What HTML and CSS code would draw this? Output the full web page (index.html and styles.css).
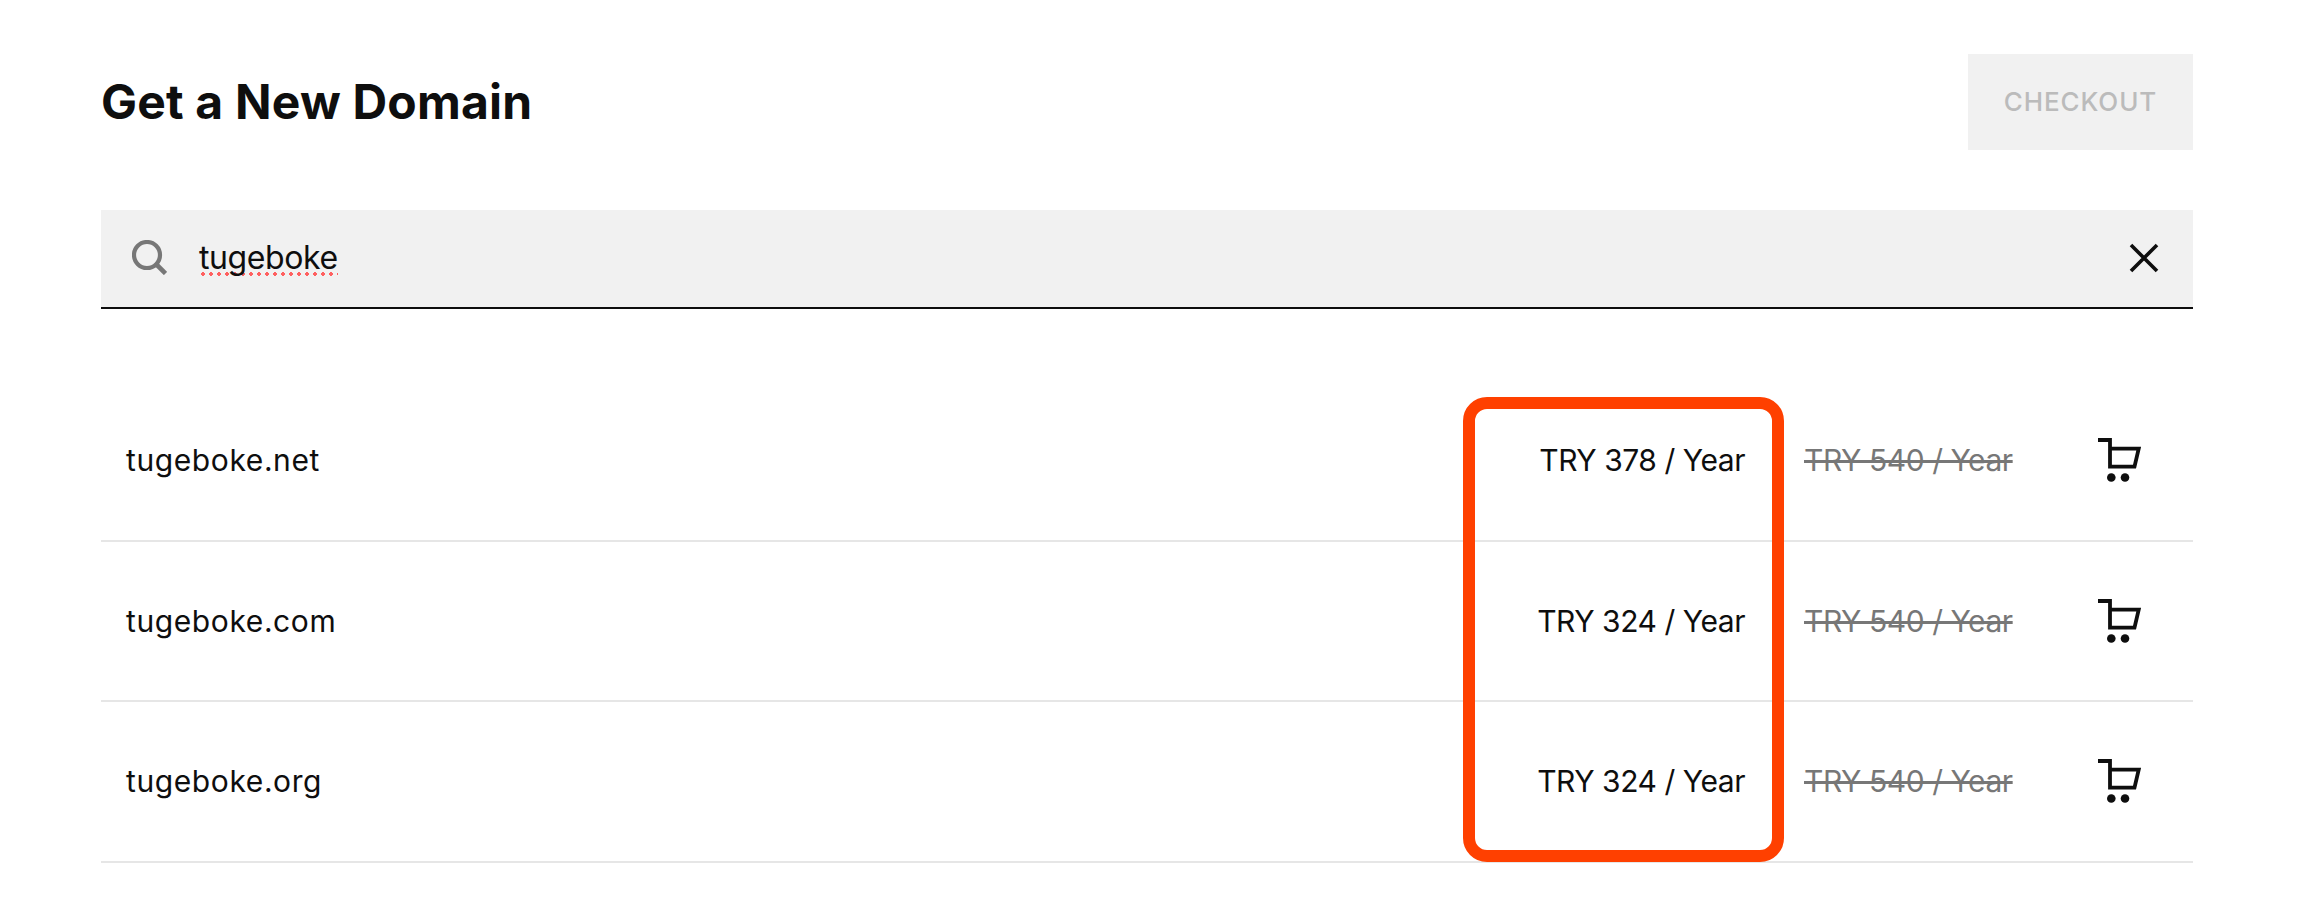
FILE: index.html
```html
<!DOCTYPE html>
<html lang="en">
<head>
<meta charset="utf-8">
<title>Get a New Domain</title>
<link rel="stylesheet" href="styles.css">
</head>
<body>
<main class="page">
  <header class="header">
    <h1 class="title">Get a New Domain</h1>
    <button class="checkout" type="button" disabled>CHECKOUT</button>
  </header>
  <div class="search">
    <svg class="search-icon" viewBox="0 0 35 35" aria-hidden="true"><circle cx="15" cy="15" r="13" fill="none" stroke="#777" stroke-width="4.2"/><path d="M24.5 24.5 L33.5 33.5" fill="none" stroke="#777" stroke-width="4.6"/></svg>
    <span class="query">tugeboke</span>
    <svg class="close-icon" viewBox="0 0 30 30" aria-hidden="true"><path d="M2 2 L28 28 M28 2 L2 28" fill="none" stroke="#0e0e0e" stroke-width="3.6"/></svg>
  </div>
  <section class="results">
    <div class="row">
      <span class="name">tugeboke.net</span>
      <span class="price">TRY 378 / Year</span>
      <s class="old">TRY 540 / Year</s>
      <svg class="cart" viewBox="0 0 43 44" aria-hidden="true"><path d="M0 2 H12 V28.7 H36.5 L40.7 10.7 H12" fill="none" stroke="#0e0e0e" stroke-width="3.8"/><circle cx="13.3" cy="39.5" r="4.3" fill="#0e0e0e"/><circle cx="27" cy="39.5" r="4.3" fill="#0e0e0e"/></svg>
    </div>
    <div class="row">
      <span class="name">tugeboke.com</span>
      <span class="price">TRY 324 / Year</span>
      <s class="old">TRY 540 / Year</s>
      <svg class="cart" viewBox="0 0 43 44" aria-hidden="true"><path d="M0 2 H12 V28.7 H36.5 L40.7 10.7 H12" fill="none" stroke="#0e0e0e" stroke-width="3.8"/><circle cx="13.3" cy="39.5" r="4.3" fill="#0e0e0e"/><circle cx="27" cy="39.5" r="4.3" fill="#0e0e0e"/></svg>
    </div>
    <div class="row">
      <span class="name">tugeboke.org</span>
      <span class="price">TRY 324 / Year</span>
      <s class="old">TRY 540 / Year</s>
      <svg class="cart" viewBox="0 0 43 44" aria-hidden="true"><path d="M0 2 H12 V28.7 H36.5 L40.7 10.7 H12" fill="none" stroke="#0e0e0e" stroke-width="3.8"/><circle cx="13.3" cy="39.5" r="4.3" fill="#0e0e0e"/><circle cx="27" cy="39.5" r="4.3" fill="#0e0e0e"/></svg>
    </div>
    <div class="highlight"></div>
  </section>
</main>
</body>
</html>
```

FILE: styles.css
```css
* { box-sizing: border-box; }
html, body { margin: 0; height: 100%; background: #fff; overflow: hidden; }
body { font-family: Inter, "Liberation Sans", sans-serif; color: #0e0e0e; }

.page { padding: 54px 127px 0 101px; }

.header { display: flex; justify-content: space-between; align-items: center; }
.title { margin: 0; font-size: 48px; font-weight: 700; line-height: 96px; letter-spacing: 0.2px; }
.checkout {
  width: 225px; height: 96px; border: 0; padding: 0 0 2px;
  background: #f1f1f1; color: #bbb;
  font: 500 26px Inter, "Liberation Sans", sans-serif;
  letter-spacing: 0.9px;
}

.search {
  display: flex; align-items: center;
  height: 99px; margin-top: 60px; padding: 0 34px 2px 31px;
  background: #f1f1f1; border-bottom: 2px solid #0e0e0e;
}
.search-icon { width: 35px; height: 35px; flex: none; }
.query {
  margin-left: 32px; font-size: 32px; line-height: 36px; letter-spacing: -0.4px;
  background: radial-gradient(circle at center, #ff6060 1.7px, transparent 2.1px) 0 100% / 8px 4px repeat-x;
}
.close-icon { width: 30px; height: 30px; margin-left: auto; flex: none; }

.results { position: relative; margin-top: 72px; }
.row {
  display: grid;
  grid-template-columns: 1fr auto 267px 129px;
  align-items: center;
  height: 160.5px; padding: 0 52px 0 25px;
  border-bottom: 2px solid #e6e6e6;
  font-size: 30px;
}
.name { letter-spacing: 0.6px; }
.price { text-align: right; letter-spacing: -0.45px; }
.old { margin-left: 59px; color: #777; white-space: nowrap; letter-spacing: -0.45px; text-decoration-thickness: 3px; }
.cart { width: 43px; height: 44px; margin-left: 86px; }
.highlight {
  position: absolute; top: 16px; right: 409px;
  width: 321px; height: 465px;
  border: 12px solid #ff4000; border-radius: 24px;
  pointer-events: none;
}
```
